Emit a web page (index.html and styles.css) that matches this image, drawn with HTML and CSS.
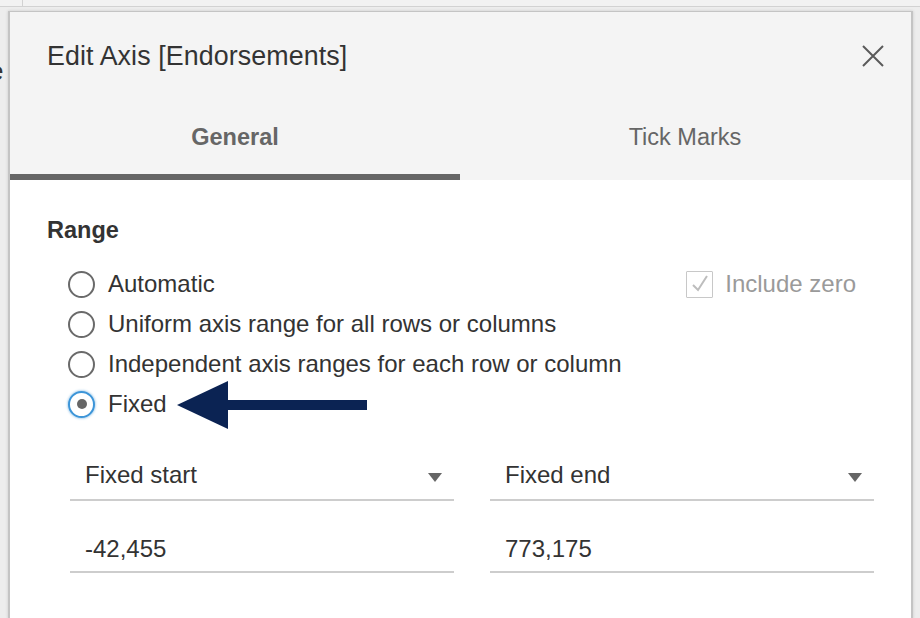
FILE: index.html
```html
<!DOCTYPE html>
<html>
<head>
<meta charset="utf-8">
<link rel="stylesheet" href="styles.css">
</head>
<body>
<div class="backdrop">
  <div class="topstrip"><span class="cell"></span></div>
  <span class="ghost">e</span>
</div>
<div class="dialog">
  <div class="header">
    <div class="titlebar">
      <h1 class="title">Edit Axis [Endorsements]</h1>
      <svg class="close" width="24" height="24" viewBox="0 0 24 24"><path d="M2 2 L22 22 M22 2 L2 22" stroke="#5a5a5a" stroke-width="2" fill="none"/></svg>
    </div>
    <div class="tabs">
      <div class="tab active">General</div>
      <div class="tab">Tick Marks</div>
    </div>
  </div>
  <div class="body">
    <div class="section-title">Range</div>
    <div class="options">
      <div class="row">
        <label class="radio"><span class="circle"></span>Automatic</label>
        <label class="check"><span class="box"><svg width="20" height="20" viewBox="0 0 20 20"><path d="M3 11 L8 16 L17 2" stroke="#bdbdbd" stroke-width="2" fill="none"/></svg></span>Include zero</label>
      </div>
      <div class="row"><label class="radio"><span class="circle"></span>Uniform axis range for all rows or columns</label></div>
      <div class="row"><label class="radio"><span class="circle"></span>Independent axis ranges for each row or column</label></div>
      <div class="row fixed-row">
        <label class="radio"><span class="circle selected"><span class="dot"></span></span>Fixed</label>
        <svg class="arrow" width="191" height="50" viewBox="0 0 191 50"><path d="M0 25 L51 1 L51 20 L190 20 L190 30 L51 30 L51 49 Z" fill="#0b2353"/></svg>
      </div>
    </div>
    <div class="fields">
      <div class="field select"><span>Fixed start</span><span class="caret"></span></div>
      <div class="field select"><span>Fixed end</span><span class="caret"></span></div>
      <div class="field input">-42,455</div>
      <div class="field input">773,175</div>
    </div>
  </div>
</div>
</body>
</html>
```
FILE: styles.css
```css
html, body {
  margin: 0;
  padding: 0;
}
body {
  width: 920px;
  height: 618px;
  overflow: hidden;
  background: #ededed;
  font-family: "Liberation Sans", Arial, sans-serif;
  position: relative;
}
.backdrop {
  position: absolute;
  left: 0;
  top: 0;
  width: 920px;
  height: 618px;
  overflow: hidden;
}
.topstrip {
  height: 6px;
  border-bottom: 1px solid #d2d2d2;
  background: #f2f2f2;
}
.cell {
  position: absolute;
  left: 22px;
  top: 0;
  width: 1px;
  height: 6px;
  background: #d2d2d2;
}
.ghost {
  position: absolute;
  left: -11px;
  top: 56px;
  font-size: 26px;
  color: #333;
}
.dialog {
  position: absolute;
  left: 8px;
  top: 11px;
  width: 901px;
  height: 607px;
  border-top: 1px solid #c4c4c4;
  border-left: 2px solid #c4c4c4;
  border-right: 2px solid #c4c4c4;
  background: #fff;
  box-shadow: 0 0 3px rgba(0,0,0,0.15);
  overflow: hidden;
}
.header {
  background: #f4f4f4;
}
.titlebar {
  height: 88px;
  display: flex;
  align-items: center;
  justify-content: space-between;
  padding: 0 26px 0 37px;
}
.title {
  margin: 0;
  font-size: 26.8px;
  font-weight: normal;
  color: #333;
  letter-spacing: 0.1px;
}
.close {
  display: block;
}
.tabs {
  display: flex;
  height: 80px;
}
.tab {
  width: 450px;
  box-sizing: border-box;
  display: flex;
  align-items: center;
  justify-content: center;
  font-size: 23.5px;
  color: #666;
  border-bottom: 6px solid transparent;
}
.tab.active {
  font-weight: bold;
  border-bottom-color: #666;
}
.body {
  padding: 36px 37px 0 37px;
}
.section-title {
  font-size: 23.5px;
  font-weight: bold;
  color: #333;
  line-height: 28px;
}
.options {
  margin-top: 20px;
  padding-left: 21px;
}
.row {
  height: 40px;
  display: flex;
  align-items: center;
  justify-content: space-between;
  position: relative;
}
.radio {
  display: flex;
  align-items: center;
  gap: 13px;
  font-size: 24px;
  color: #333;
}
.circle {
  width: 23px;
  height: 23px;
  border: 2px solid #6a6a6a;
  border-radius: 50%;
  background: #fff;
  display: flex;
  align-items: center;
  justify-content: center;
}
.circle.selected {
  border-color: #3d95d8;
  box-shadow: 0 0 2px 1px rgba(61,149,216,0.35);
}
.dot {
  width: 10px;
  height: 10px;
  border-radius: 50%;
  background: #666;
}
.check {
  display: flex;
  align-items: center;
  gap: 12px;
  font-size: 24px;
  color: #9a9a9a;
  margin-right: 18px;
}
.box {
  width: 25px;
  height: 25px;
  border: 1.5px solid #c8c8c8;
  border-radius: 1px;
  display: flex;
  align-items: center;
  justify-content: center;
}
.arrow {
  position: absolute;
  left: 109px;
  top: -4px;
}
.fields {
  display: grid;
  grid-template-columns: 384px 384px;
  column-gap: 36px;
  margin-left: 23px;
  margin-top: 27px;
}
.field {
  border-bottom: 2px solid #cdcdcd;
  padding: 0 15px;
  font-size: 24px;
  color: #333;
  box-sizing: border-box;
}
.select {
  height: 50px;
  display: flex;
  align-items: center;
  justify-content: space-between;
}
.caret {
  width: 0;
  height: 0;
  border-left: 7px solid transparent;
  border-right: 7px solid transparent;
  border-top: 9px solid #666;
  margin-right: -3px;
  margin-top: 4px;
}
.input {
  height: 72px;
  padding-top: 36px;
  line-height: 24px;
}
```
